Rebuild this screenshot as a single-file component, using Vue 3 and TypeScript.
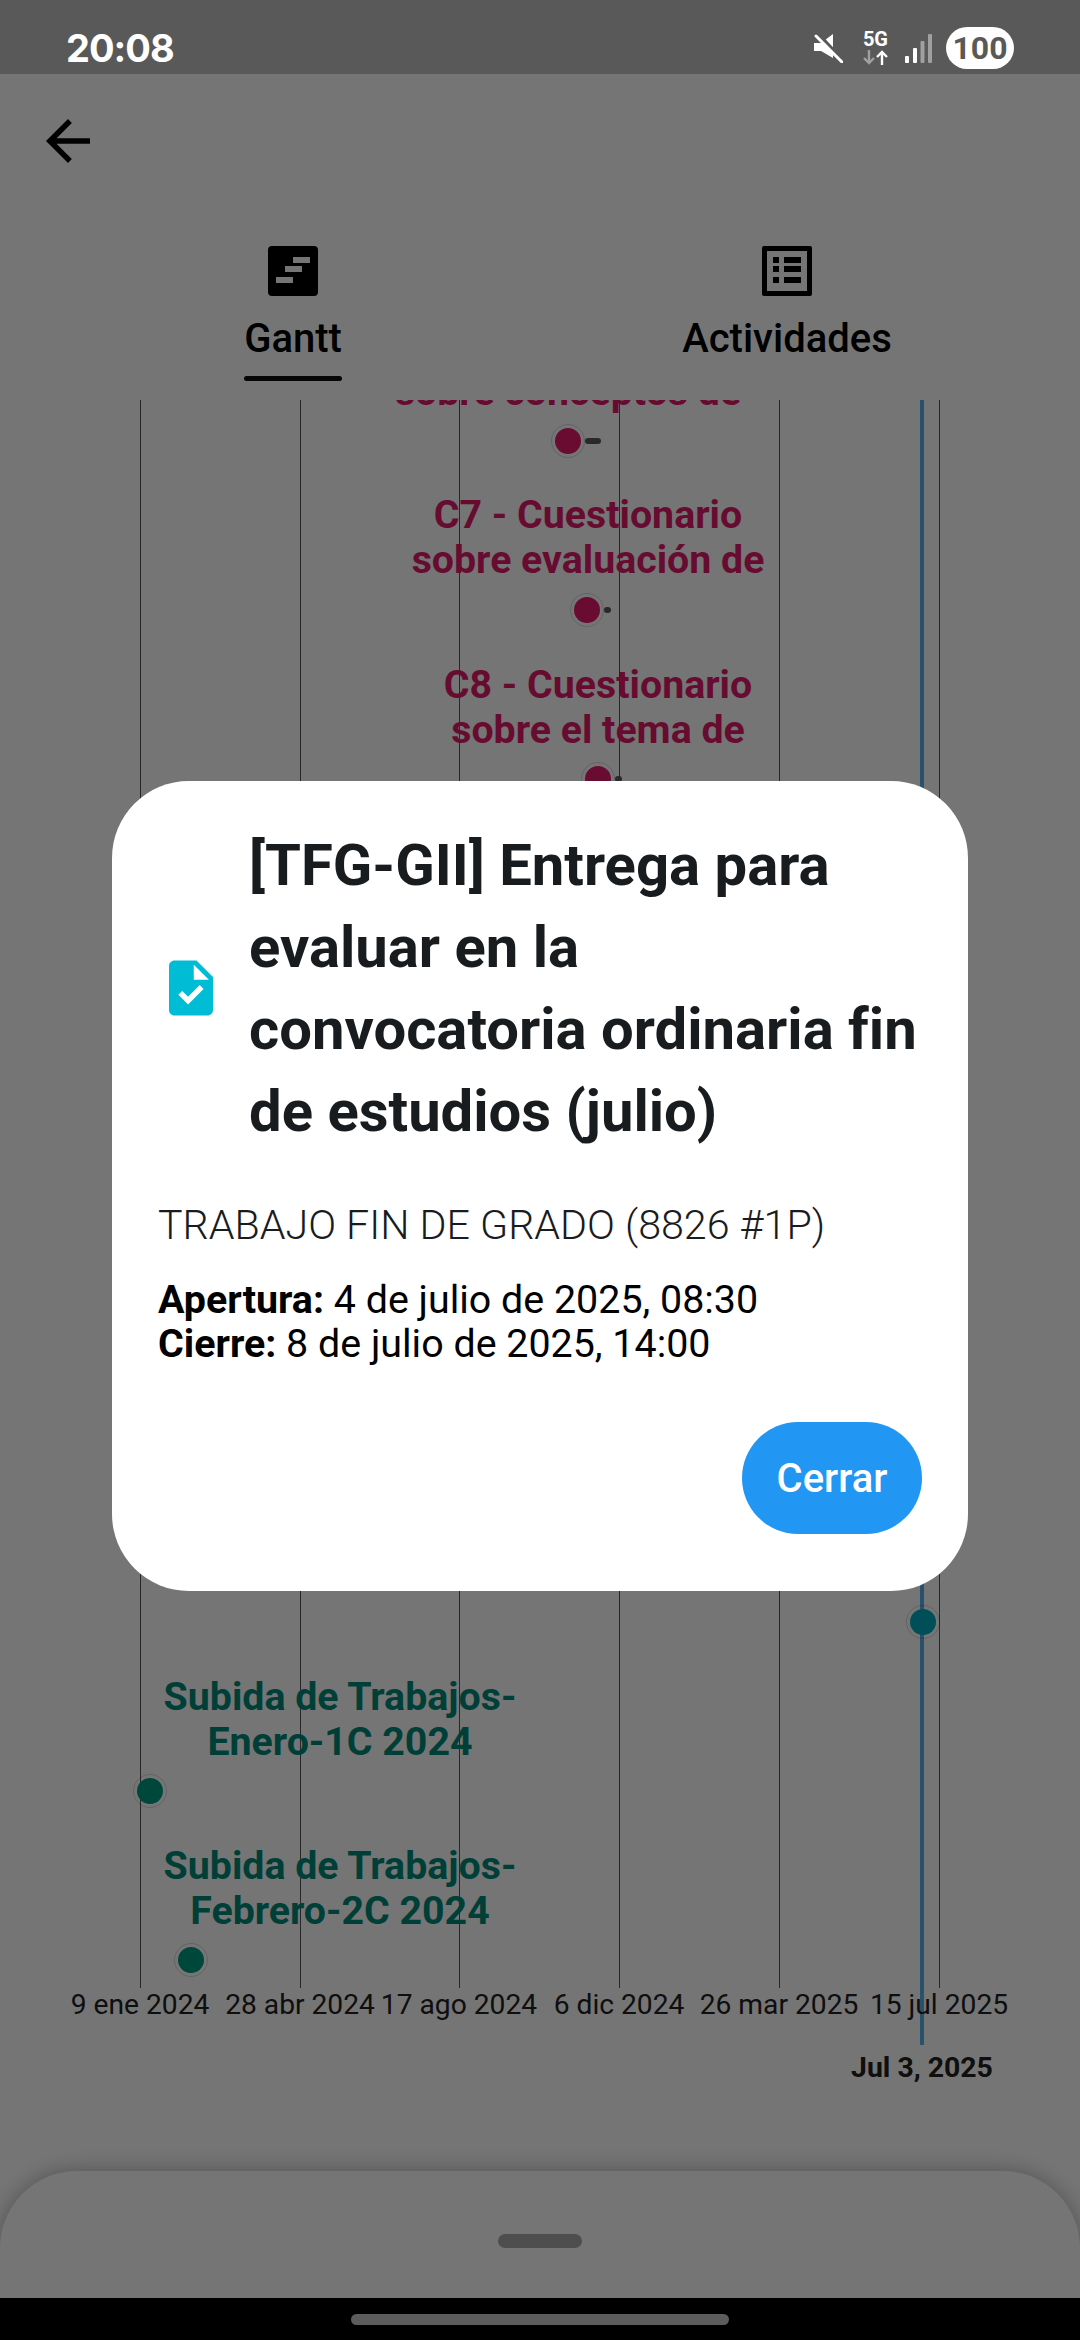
<script setup lang="ts">
type Task = {
  lines: string[];
  center: number;
  top: number;
  dotX: number;
  dotY: number;
  tail: number;
  kind: "red" | "green";
};

const gridLines = [140, 300, 459, 619, 779, 939];
const axisLabels = [
  "9 ene 2024",
  "28 abr 2024",
  "17 ago 2024",
  "6 dic 2024",
  "26 mar 2025",
  "15 jul 2025",
];

// y values are relative to the top of the chart (page y 400)
const tasks: Task[] = [
  { lines: ["sobre conceptos de"], center: 568, top: -30, dotX: 568, dotY: 41, tail: 16, kind: "red" },
  { lines: ["C7 - Cuestionario", "sobre evaluación de"], center: 588, top: 93, dotX: 587, dotY: 210, tail: 7, kind: "red" },
  { lines: ["C8 - Cuestionario", "sobre el tema de"], center: 598, top: 263, dotX: 598, dotY: 379, tail: 7, kind: "red" },
  { lines: ["Subida de Trabajos-", "Enero-1C 2024"], center: 340, top: 1275, dotX: 150, dotY: 1391, tail: 0, kind: "green" },
  { lines: ["Subida de Trabajos-", "Febrero-2C 2024"], center: 340, top: 1444, dotX: 191, dotY: 1560, tail: 0, kind: "green" },
];
</script>

<template>
  <div class="screen">
    <header class="statusBar">
      <span class="clock">20:08</span>
      <div class="statusIcons">
        <svg class="muteIcon" viewBox="0 0 29 29" width="29" height="29">
          <path d="M0 9h7L19 0v24L7 17H0z" fill="#fff" />
          <path d="M4 0l25 27" stroke="#595959" stroke-width="4" />
          <path d="M2 2l26 26" stroke="#fff" stroke-width="3" stroke-linecap="round" />
        </svg>
        <div class="network">
          <span class="networkLabel">5G</span>
          <svg viewBox="0 0 25 15" width="25" height="15" fill="none" stroke-width="2.4">
            <path d="M6 0v13M1 8l5 5 5-5" stroke="#a0a0a0" />
            <path d="M19 15V2M14 7l5-5 5 5" stroke="#fff" />
          </svg>
        </div>
        <svg class="signalIcon" viewBox="0 0 27 29" width="27" height="29">
          <rect x="0" y="22" width="4" height="7" rx="1" fill="#fff" />
          <rect x="8" y="14" width="4" height="15" rx="1" fill="#fff" />
          <rect x="15.5" y="7" width="4" height="22" rx="1" fill="#a0a0a0" />
          <rect x="23" y="0" width="4" height="29" rx="1" fill="#a0a0a0" />
        </svg>
        <span class="battery">100</span>
      </div>
    </header>

    <div class="topBar">
      <svg viewBox="0 0 24 24" width="66" height="66">
        <path d="M20 11H7.83l5.59-5.59L12 4l-8 8 8 8 1.41-1.41L7.83 13H20v-2z" fill="#000" />
      </svg>
    </div>

    <nav class="tabs">
      <div class="tab">
        <svg viewBox="0 0 50 50" width="50" height="50">
          <path
            fill-rule="evenodd"
            d="M4 0h42a4 4 0 0 1 4 4v42a4 4 0 0 1-4 4H4a4 4 0 0 1-4-4V4a4 4 0 0 1 4-4zM25 17h17v-6H25zM17 26h17v-6H17zM8 37h17v-6H8z"
            fill="#000"
          />
        </svg>
        <span class="tabLabel activeLabel">Gantt</span>
      </div>
      <div class="tab">
        <svg viewBox="0 0 50 50" width="50" height="50">
          <path
            fill-rule="evenodd"
            d="M2 0h46a2 2 0 0 1 2 2v46a2 2 0 0 1-2 2H2a2 2 0 0 1-2-2V2a2 2 0 0 1 2-2zM5 5v40h40V5z"
            fill="#000"
          />
          <path d="M11 11h6v6h-6zM22 11h17v6H22zM11 20h6v6h-6zM22 20h17v6H22zM11 31h6v6h-6zM22 31h17v6H22z" fill="#000" />
        </svg>
        <span class="tabLabel">Actividades</span>
      </div>
    </nav>

    <section class="chart">
      <div class="plot">
        <i v-for="x in gridLines" :key="x" class="gridLine" :style="{ left: x + 'px' }"></i>
        <template v-for="task in tasks" :key="task.top">
          <div :class="['taskLabel', task.kind]" :style="{ left: task.center + 'px', top: task.top + 'px' }">
            <div v-for="line in task.lines" :key="line">{{ line }}</div>
          </div>
          <i
            v-if="task.tail"
            class="tail"
            :style="{ left: task.dotX + 17 + 'px', top: task.dotY - 3 + 'px', width: task.tail + 'px' }"
          ></i>
          <i :class="['dot', task.kind]" :style="{ left: task.dotX + 'px', top: task.dotY + 'px' }"></i>
        </template>
      </div>
      <i class="todayLine"></i>
      <i class="dot today"></i>
      <div class="axis">
        <span v-for="(label, i) in axisLabels" :key="label" class="axisLabel" :style="{ left: gridLines[i] + 'px' }">{{ label }}</span>
      </div>
      <span class="todayLabel">Jul 3, 2025</span>
    </section>

    <div class="sheet">
      <i class="handle"></i>
    </div>

    <div class="navBar">
      <i class="navPill"></i>
    </div>

    <div class="barrier">
      <div class="dialog">
        <div class="dialogHead">
          <svg class="taskIcon" viewBox="0 0 24 24" width="66" height="66">
            <path
              d="M14 2H6c-1.1 0-1.99.9-1.99 2L4 20c0 1.1.89 2 1.99 2H18c1.1 0 2-.9 2-2V8l-6-6zm-3.06 16L7.4 14.46l1.41-1.41 2.12 2.12 4.24-4.24 1.41 1.41L10.94 18zM13 9V3.5L18.5 9H13z"
              fill="#00bcd4"
            />
          </svg>
          <h2 class="dialogTitle">[TFG-GII] Entrega para evaluar en la convocatoria ordinaria fin de estudios (julio)</h2>
        </div>
        <p class="course">TRABAJO FIN DE GRADO (8826 #1P)</p>
        <p class="dates">
          <b>Apertura:</b> 4 de julio de 2025, 08:30<br />
          <b>Cierre:</b> 8 de julio de 2025, 14:00
        </p>
        <div class="actions">
          <button class="closeButton" type="button">Cerrar</button>
        </div>
      </div>
    </div>
  </div>
</template>

<style>
html,
body {
  margin: 0;
  background: #fff;
}
</style>

<style scoped>
.screen {
  position: relative;
  display: flex;
  flex-direction: column;
  width: 1080px;
  height: 2340px;
  overflow: hidden;
  font-family: Roboto, "Liberation Sans", sans-serif;
  font-variant-ligatures: none;
  color: #000;
  background: #fff;
}

/* sits above the dialog barrier, the system bar is not dimmed */
.statusBar {
  position: relative;
  z-index: 3;
  display: flex;
  flex: none;
  align-items: center;
  justify-content: space-between;
  height: 74px;
  padding: 22px 66px 0;
  box-sizing: border-box;
  color: #fff;
  background: #595959;
}

.clock {
  font-family: Inter, Roboto, sans-serif;
  font-size: 38px;
  font-weight: 700;
  line-height: 1;
  letter-spacing: -1px;
}

.statusIcons {
  display: flex;
  align-items: center;
  column-gap: 20px;
}

.network {
  display: flex;
  flex-direction: column;
  row-gap: 3px;
  align-items: center;
}

.networkLabel {
  font-size: 20px;
  font-weight: 700;
  line-height: 15px;
}

.signalIcon {
  margin-left: -3px;
}

.battery {
  width: 68px;
  height: 42px;
  margin-left: -6px;
  font-size: 32px;
  font-weight: 700;
  line-height: 42px;
  color: #595959;
  text-align: center;
  background: #fff;
  border-radius: 21px;
}

.topBar {
  flex: none;
  height: 172px;
  padding-top: 34px;
  padding-left: 35px;
  box-sizing: border-box;
}

.topBar svg {
  display: block;
}

.tabs {
  display: flex;
  flex: none;
  height: 154px;
  padding: 0 46px;
}

.tab {
  display: flex;
  flex: 1;
  flex-direction: column;
  align-items: center;
}

.tabLabel {
  position: relative;
  margin-top: 20px;
  font-size: 40px;
  font-weight: 500;
  line-height: 46px;
}

.activeLabel::after {
  position: absolute;
  top: 60px;
  left: 0;
  width: 100%;
  height: 5px;
  content: "";
  background: #111;
  border-radius: 3px;
}

.chart {
  position: relative;
  flex: 1;
  min-height: 0;
}

.plot {
  position: absolute;
  inset: 0 0 auto;
  height: 1588px;
  overflow: hidden;
}

.gridLine {
  position: absolute;
  top: 0;
  bottom: 0;
  width: 1px;
  background: #555;
}

.taskLabel {
  position: absolute;
  font-size: 39.3px;
  font-weight: 700;
  line-height: 45px;
  text-align: center;
  white-space: nowrap;
  transform: translateX(-50%);
}

.taskLabel.red {
  color: #e01a6a;
}

.taskLabel.green {
  color: #008a78;
}

.dot {
  position: absolute;
  width: 26px;
  height: 26px;
  margin: -13px 0 0 -13px;
  border-radius: 50%;
  outline: 1px solid rgb(0 0 0 / 15%);
  outline-offset: 3px;
}

.dot.red {
  background: #e81a6c;
}

.dot.green {
  background: #009c80;
}

.dot.today {
  top: 1222px;
  left: 923px;
  background: #00aac0;
}

.tail {
  position: absolute;
  height: 6px;
  background: #5a5a5a;
  border-radius: 3px;
}

.todayLine {
  position: absolute;
  top: 0;
  left: 920px;
  width: 4px;
  height: 1645px;
  background: #58b0f0;
}

.axis {
  position: absolute;
  top: 1588px;
  left: 0;
  width: 100%;
}

.axisLabel {
  position: absolute;
  top: 0;
  font-size: 28.2px;
  line-height: 34px;
  color: #222;
  white-space: nowrap;
  transform: translateX(-50%);
}

.todayLabel {
  position: absolute;
  top: 1652px;
  left: 922px;
  font-size: 28.4px;
  font-weight: 700;
  line-height: 32px;
  color: #222;
  white-space: nowrap;
  transform: translateX(-50%);
}

.sheet {
  z-index: 1;
  display: flex;
  flex: none;
  justify-content: center;
  height: 127px;
  padding-top: 63px;
  box-sizing: border-box;
  background: #fff;
  border-radius: 77px 77px 0 0;
  box-shadow: 0 0 22px rgb(0 0 0 / 30%);
}

.handle {
  width: 84px;
  height: 14px;
  background: #aaa;
  border-radius: 7px;
}

.navBar {
  z-index: 1;
  display: flex;
  flex: none;
  justify-content: center;
  height: 42px;
  padding-top: 16px;
  box-sizing: border-box;
  background: #000;
}

.navPill {
  width: 378px;
  height: 11px;
  background: #c8c8c8;
  border-radius: 6px;
}

.barrier {
  position: absolute;
  inset: 0;
  z-index: 2;
  display: flex;
  align-items: center;
  justify-content: center;
  padding: 74px 0 42px;
  box-sizing: border-box;
  background: rgb(0 0 0 / 54%);
}

.dialog {
  display: flex;
  flex-direction: column;
  width: 856px;
  padding: 43px 46px 57px;
  box-sizing: border-box;
  color: #191c1e;
  background: #fff;
  border-radius: 77px;
}

.dialogHead {
  display: flex;
  column-gap: 25px;
  align-items: center;
}

.taskIcon {
  flex: none;
}

.dialogTitle {
  margin: 0;
  font-size: 58px;
  font-weight: 700;
  line-height: 82px;
}

.course {
  margin: 51px 0 0;
  font-size: 41.2px;
  font-weight: 300;
  line-height: 44px;
}

.dates {
  margin: 31px 0 0;
  font-size: 39.4px;
  line-height: 44px;
  color: #000;
}

.dates b {
  font-weight: 700;
}

.actions {
  display: flex;
  justify-content: flex-end;
  margin-top: 56px;
}

.closeButton {
  width: 180px;
  height: 112px;
  padding: 0;
  font-family: inherit;
  font-size: 40px;
  font-weight: 500;
  color: #fff;
  background: #2196f3;
  border: none;
  border-radius: 56px;
}
</style>
